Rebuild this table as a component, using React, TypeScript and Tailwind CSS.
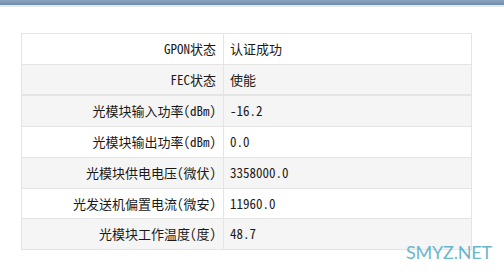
import React from "react";

const rows: { label: string; value: string; cls: string }[] = [
  { label: "GPON状态", value: "认证成功", cls: "h-[31px] bg-white border-t border-[#e4e4e4]" },
  { label: "FEC状态", value: "使能", cls: "h-[30px] bg-[#f5f5f5] border-t border-[#e4e4e4]" },
  { label: "光模块输入功率(dBm)", value: "-16.2", cls: "h-[32px] bg-[#f5f5f5] border-t-2 border-[#e4e4e4]" },
  { label: "光模块输出功率(dBm)", value: "0.0", cls: "h-[31px] bg-white border-t border-[#e4e4e4]" },
  { label: "光模块供电电压(微伏)", value: "3358000.0", cls: "h-[31px] bg-[#f5f5f5] border-t border-[#e4e4e4]" },
  { label: "光发送机偏置电流(微安)", value: "11960.0", cls: "h-[30px] bg-white border-t border-[#e4e4e4]" },
  { label: "光模块工作温度(度)", value: "48.7", cls: "h-[31px] bg-[#f5f5f5] border-t border-[#e4e4e4]" },
];

export default function App() {
  return (
    <div className="relative w-[504px] h-[272px] bg-white overflow-hidden">
      <div className="h-[5px] bg-gradient-to-b from-[#8ea3bd] to-[#6d8cae]" />
      <div className="h-[2px] bg-[#e6e9f0]" />
      <div className="pl-[21px] pt-[26px]">
        <div
          className="w-[451px] border-x border-b border-[#e4e4e4] text-[13px] text-[#1a1a1a]"
          style={{ fontFamily: '"Noto Sans Mono CJK SC", "Noto Sans CJK SC", "Liberation Mono", monospace' }}
        >
          {rows.map((r) => (
            <div key={r.label} className={`flex ${r.cls}`}>
              <div className="w-[202px] shrink-0 flex items-center justify-end pr-[7px] border-r border-[#e4e4e4] whitespace-nowrap">
                {r.label}
              </div>
              <div className="flex-1 flex items-center pl-[6px] whitespace-nowrap">{r.value}</div>
            </div>
          ))}
        </div>
      </div>
      <div
        className="absolute left-[406px] top-[242px] text-[18px] leading-[20px] text-[#6bb6ca] tracking-[-0.2px]"
        style={{ fontFamily: "Lato, sans-serif" }}
      >
        SMYZ.NET
      </div>
    </div>
  );
}
